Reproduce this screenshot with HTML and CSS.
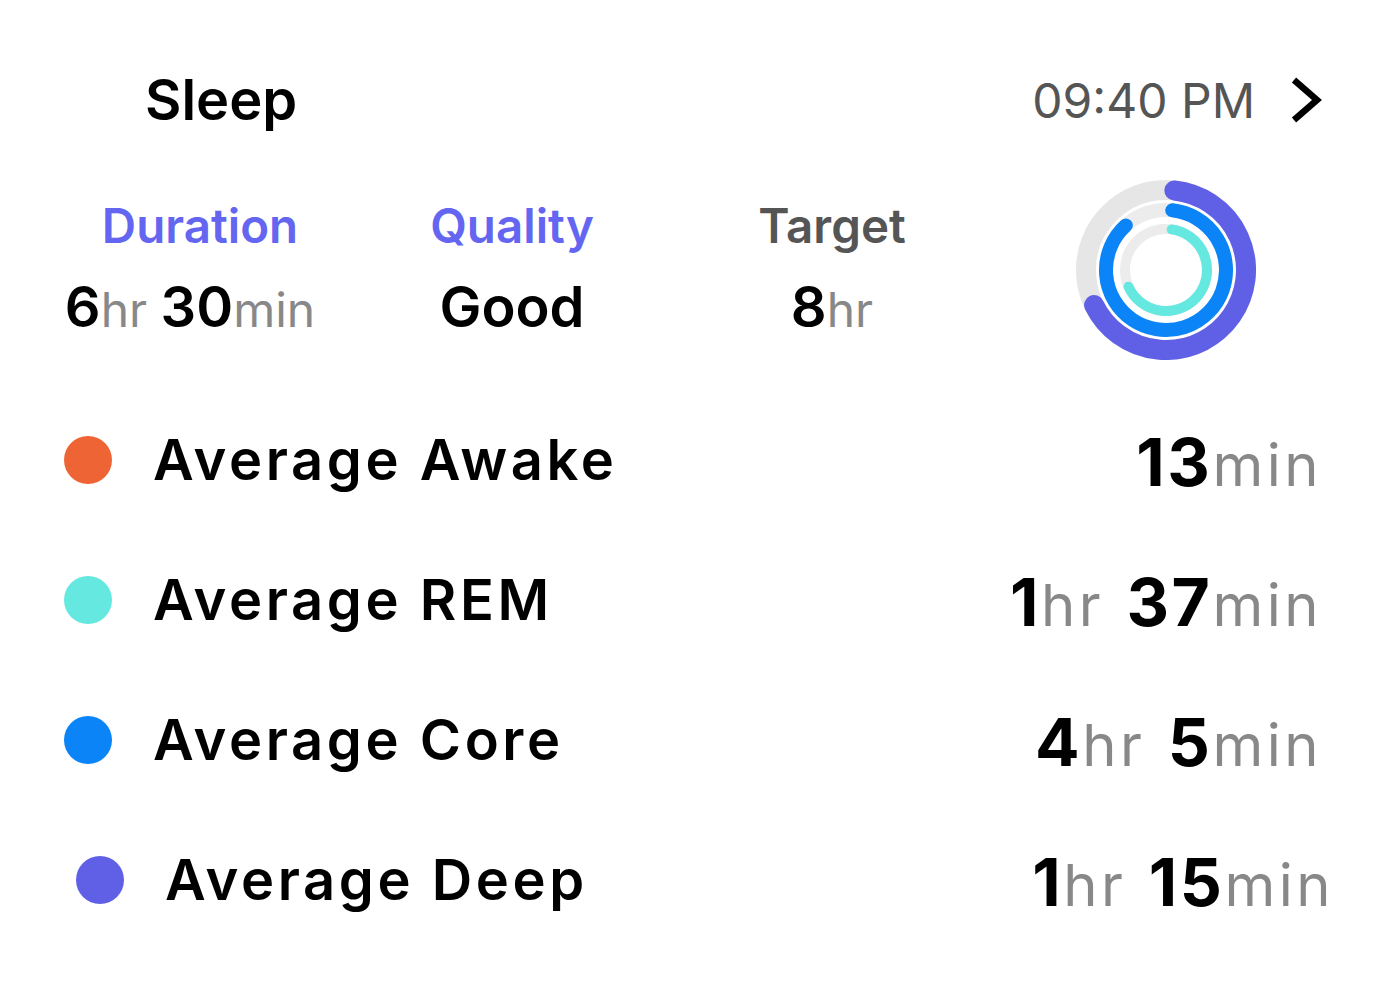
FILE: index.html
```html
<!DOCTYPE html>
<html>
<head>
<meta charset="utf-8">
<link rel="stylesheet" href="styles.css">
</head>
<body>
<div class="card">
  <header class="head">
    <h1 class="title">Sleep</h1>
    <div class="time">
      <span>09:40 PM</span>
      <svg class="chev" width="32" height="48" viewBox="0 0 32 48"><path d="M4 4 L27 24 L4 44" fill="none" stroke="#000" stroke-width="6.5"/></svg>
    </div>
  </header>
  <section class="stats">
    <div class="stat">
      <div class="stat-label accent">Duration</div>
      <div class="stat-value offset"><b>6</b><i>hr</i> <b>30</b><i>min</i></div>
    </div>
    <div class="stat">
      <div class="stat-label accent">Quality</div>
      <div class="stat-value"><b>Good</b></div>
    </div>
    <div class="stat">
      <div class="stat-label muted">Target</div>
      <div class="stat-value"><b>8</b><i>hr</i></div>
    </div>
    <div class="ring-wrap">
      <svg width="180" height="180" viewBox="0 0 180 180">
        <circle cx="90" cy="90" r="80" fill="none" stroke="#e6e6e6" stroke-width="20"/>
        <circle cx="90" cy="90" r="60" fill="none" stroke="#ececec" stroke-width="14"/>
        <circle cx="90" cy="90" r="41" fill="none" stroke="#ececec" stroke-width="10"/>
        <path d="M98.36 10.44 A80 80 0 1 1 18.1 125.07" fill="none" stroke="#6060e6" stroke-width="20" stroke-linecap="round"/>
        <path d="M96.27 30.33 A60 60 0 1 1 49.85 45.41" fill="none" stroke="#0a84f7" stroke-width="14" stroke-linecap="round"/>
        <path d="M95.71 49.40 A41 41 0 1 1 52.55 106.68" fill="none" stroke="#64e8e0" stroke-width="10" stroke-linecap="round"/>
      </svg>
    </div>
  </section>
  <section class="rows">
    <div class="row">
      <span class="dot awake"></span>
      <span class="row-label">Average Awake</span>
      <span class="row-value"><b>13</b><i>min</i></span>
    </div>
    <div class="row">
      <span class="dot rem"></span>
      <span class="row-label">Average REM</span>
      <span class="row-value"><b>1</b><i>hr</i> <b>37</b><i>min</i></span>
    </div>
    <div class="row">
      <span class="dot core"></span>
      <span class="row-label">Average Core</span>
      <span class="row-value"><b>4</b><i>hr</i> <b>5</b><i>min</i></span>
    </div>
    <div class="row shifted">
      <span class="dot deep"></span>
      <span class="row-label">Average Deep</span>
      <span class="row-value"><b>1</b><i>hr</i> <b>15</b><i>min</i></span>
    </div>
  </section>
</div>
</body>
</html>
```
FILE: styles.css
```css
* { box-sizing: border-box; }
html, body { margin: 0; padding: 0; background: #fff; }
body { font-family: Inter, "Noto Sans", sans-serif; color: #000; }
.card { width: 1384px; padding-top: 50px; }
.head { display: flex; align-items: center; justify-content: space-between; height: 100px; padding: 0 62px 0 145px; }
.title { margin: 0; font-size: 56px; font-weight: 600; letter-spacing: 0; }
.time { display: flex; align-items: center; gap: 35px; font-size: 48px; color: #555; font-weight: 400; }
.chev { display: block; }
.stats { display: grid; grid-template-columns: 320px 304px 336px 1fr; align-items: center; margin-top: 30px; padding-left: 40px; height: 180px; }
.stat { display: flex; flex-direction: column; align-items: center; }
.stat-label { font-size: 47.5px; font-weight: 600; line-height: 56px; margin-top: 2px; }
.accent { color: #6466f1; }
.muted { color: #555; }
.stat-value { font-size: 48px; line-height: 70px; margin-top: 18px; white-space: nowrap; }
.stat-value.offset { margin-right: 20px; }
.stat-value b { font-size: 56px; font-weight: 600; }
.stat-value i { font-style: normal; color: #888; font-weight: 400; }
.ring-wrap { display: flex; justify-content: center; padding-right: 52px; }
.ring-wrap svg { display: block; }
.rows { display: flex; flex-direction: column; padding: 0 62px 0 64px; margin-top: 30px; }
.row { display: flex; align-items: center; height: 140px; }
.row.shifted { padding-left: 12px; margin-right: -12px; }
.dot { width: 48px; height: 48px; border-radius: 50%; flex: none; margin-right: 41px; }
.awake { background: #ef6434; }
.rem { background: #64e8e0; }
.core { background: #0a84f7; }
.deep { background: #6060e6; }
.row-label { flex: 1; font-size: 56px; font-weight: 600; letter-spacing: 3.6px; }
.row-value { font-size: 58px; white-space: nowrap; line-height: 70px; padding-top: 6px; word-spacing: 6px; }
.row-value b { font-size: 66px; font-weight: 700; letter-spacing: 2.5px; }
.row-value i { font-style: normal; color: #888; font-weight: 400; letter-spacing: 3.5px; }
```
